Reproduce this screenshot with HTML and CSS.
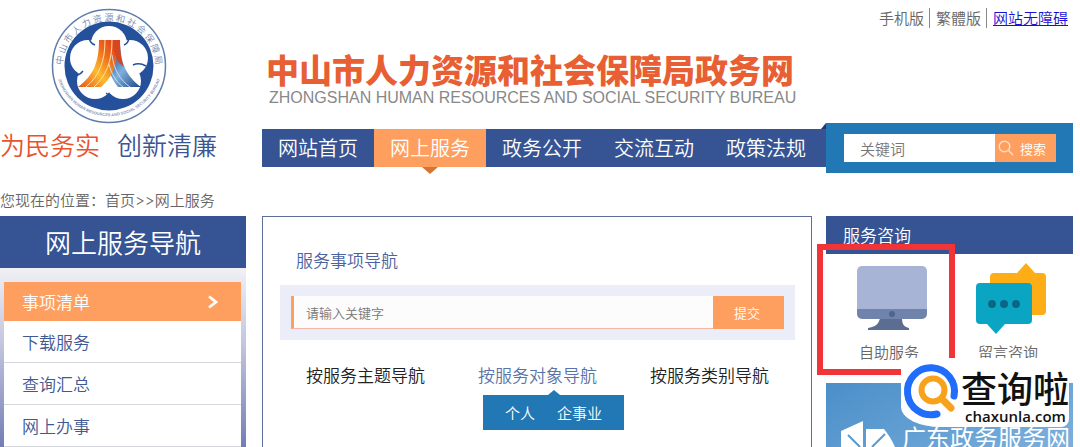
FILE: index.html
```html
<!DOCTYPE html>
<html lang="zh-CN">
<head>
    <meta charset="UTF-8">
    <meta name="viewport" content="width=device-width, initial-scale=1.0">
    <title>中山市人力资源和社会保障局政务网</title>
    <link rel="stylesheet" href="styles.css">
</head>
<body>

    <!-- Header -->
    <header class="header">
        <div class="brand">
            <svg class="emblem" viewBox="0 0 116 116" width="116" height="116" aria-hidden="true">
                <defs>
                    <path id="ringTop" d="M12 66 A46.500 46.500 0 1 1 104 66"/>
                    <path id="ringBottom" d="M5 62 A53.500 53.500 0 0 0 111 62"/>
                    <linearGradient id="fire" x1="1" y1="0" x2="0" y2="1">
                        <stop offset="0" stop-color="#dc3a1a"/>
                        <stop offset="0.3" stop-color="#ee6a1e"/>
                        <stop offset="0.6" stop-color="#fdbb2d"/>
                        <stop offset="1" stop-color="#e9501c"/>
                    </linearGradient>
                    <linearGradient id="water" x1="0" y1="0" x2="1" y2="1">
                        <stop offset="0" stop-color="#e8481f"/>
                        <stop offset="0.3" stop-color="#2a5a9c"/>
                        <stop offset="0.6" stop-color="#7fb0dc"/>
                        <stop offset="1" stop-color="#1c4684"/>
                    </linearGradient>
                </defs>
                <circle cx="58" cy="58" r="56.500" fill="#fff" stroke="#5f7cab" stroke-width="1.500"/>
                <circle cx="58" cy="58" r="44.500" fill="#25509b"/>
                <g fill="#fff">
                    <circle cx="58" cy="36" r="18"/>
                    <circle cx="79" cy="50" r="18"/>
                    <circle cx="72" cy="73" r="18"/>
                    <circle cx="44" cy="73" r="18"/>
                    <circle cx="37" cy="50" r="18"/>
                    <circle cx="58" cy="58" r="20"/>
                </g>
                <path d="M38 30c1 4 3 6 6 7M78 31c-1 3-2 5-5 6M95 58c-5-3-9-3-13-1M21 68c4 0 8-1 11-5M61 93c-1-4-3-6-6-8" stroke="#25509b" stroke-width="1.500" fill="none"/>
                <path d="M49 32h20C69 54 75 68 90 79H67C60 70 57 62 57 52z" fill="url(#water)"/>
                <path d="M48 32h19C67 54 63 68 50 79H27C42 68 48 55 48 32z" fill="url(#fire)"/>
                <path d="M62 32h7c0 12 1 20 4 27l-5-4c-4-7-6-13-6-23z" fill="#d9451f"/>
                <path d="M61 47C63 62 69 72 79 79M58 56C60 65 65 74 72 79" stroke="#c8def2" stroke-width="1" fill="none"/>
                <path d="M54 32C54 54 48 68 35 79M61 32C61 54 55 68 43 79" stroke="#ffe2a0" stroke-width="1" fill="none"/>
                <text class="ring-cn"><textPath href="#ringTop" startOffset="50%" text-anchor="middle">中 山 市 人 力 资 源 和 社 会 保 障 局</textPath></text>
                <text class="ring-en"><textPath href="#ringBottom" startOffset="50%" text-anchor="middle">ZHONGSHAN HUMAN RESOURCES AND SOCIAL SECURITY BUREAU</textPath></text>
            </svg>
            <p class="slogan"><span class="slogan-red">为民务实</span><span class="slogan-blue">创新清廉</span></p>
        </div>

        <div class="header-main">
            <div class="top-links">
                <a href="#">手机版</a>
                <a href="#">繁體版</a>
                <a href="#" class="barrier-free">网站无障碍</a>
            </div>
            <div class="site-title">
                <h1>中山市人力资源和社会保障局政务网</h1>
                <p>ZHONGSHAN HUMAN RESOURCES AND SOCIAL SECURITY BUREAU</p>
            </div>
            <div class="bar">
                <nav class="main-nav">
                    <a href="#">网站首页</a>
                    <a href="#" class="active">网上服务</a>
                    <a href="#">政务公开</a>
                    <a href="#">交流互动</a>
                    <a href="#">政策法规</a>
                </nav>
                <form class="site-search">
                    <input type="text" placeholder="关键词" aria-label="关键词">
                    <button type="button">
                        <svg viewBox="0 0 16 16" width="16" height="16" aria-hidden="true">
                            <circle cx="6.500" cy="6.500" r="5.300" fill="none" stroke="#ffdcc0" stroke-width="1.400"/>
                            <path d="M10.500 10.500l4.500 4.500" stroke="#ffdcc0" stroke-width="1.600"/>
                        </svg>
                        搜索
                    </button>
                </form>
            </div>
        </div>
    </header>

    <div class="breadcrumb">您现在的位置：<a href="#">首页</a><span>&gt;&gt;</span><a href="#">网上服务</a></div>

    <div class="page">
        <!-- Left menu -->
        <aside class="side">
            <h2>网上服务导航</h2>
            <div class="side-body">
                <ul>
                    <li class="active">
                        <a href="#">事项清单
                            <svg viewBox="0 0 12 14" width="12" height="14" aria-hidden="true">
                                <path d="M2 1.500l7 5.500-7 5.500" fill="none" stroke="#fff" stroke-width="2.800"/>
                            </svg>
                        </a>
                    </li>
                    <li><a href="#">下载服务</a></li>
                    <li><a href="#">查询汇总</a></li>
                    <li><a href="#">网上办事</a></li>
                </ul>
            </div>
        </aside>

        <div class="content">
            <!-- Service navigation -->
            <main class="panel">
                <h3>服务事项导航</h3>
                <form class="item-search">
                    <input type="text" placeholder="请输入关键字" aria-label="请输入关键字">
                    <button type="button">提交</button>
                </form>
                <div class="tabs">
                    <a href="#">按服务主题导航</a>
                    <div class="tab-open">
                        <a href="#">按服务对象导航</a>
                        <div class="sub-tabs">
                            <a href="#">个人</a>
                            <a href="#">企事业</a>
                        </div>
                    </div>
                    <a href="#">按服务类别导航</a>
                </div>
            </main>

            <!-- Right column -->
            <aside class="consult">
                <h3>服务咨询</h3>
                <div class="consult-list">
                    <a href="#">
                        <svg viewBox="0 0 72 74" width="72" height="74" aria-hidden="true">
                            <path d="M27 55h22c0 6 2 9 7 10v2H15v-2c7-1 11-4 12-10z" fill="#5b6e91"/>
                            <path d="M4 46h70v5a5 5 0 0 1-5 5H9a5 5 0 0 1-5-5z" fill="#7083ab"/>
                            <path d="M9 3h60a5 5 0 0 1 5 5v38H4V8a5 5 0 0 1 5-5z" fill="#a7b4d6"/>
                            <circle cx="39" cy="51" r="3" fill="#50658b"/>
                        </svg>
                        自助服务
                    </a>
                    <a href="#">
                        <svg viewBox="-3 0 72 74" width="72" height="74" aria-hidden="true">
                            <path d="M19 10h23l9-10 9 10h7a4 4 0 0 1 4 4v34a4 4 0 0 1-4 4H19a4 4 0 0 1-4-4V14a4 4 0 0 1 4-4z" fill="#fdae17"/>
                            <path d="M5 20h48a4 4 0 0 1 4 4v33a4 4 0 0 1-4 4H30L21 71 12 61H5a4 4 0 0 1-4-4V24a4 4 0 0 1 4-4z" fill="#0aa5c3"/>
                            <g fill="#0b6684">
                                <circle cx="17" cy="41" r="4"/>
                                <circle cx="29" cy="41" r="4"/>
                                <circle cx="41" cy="41" r="4"/>
                            </g>
                        </svg>
                        留言咨询
                    </a>
                </div>
                <a href="#" class="banner">
                    <svg viewBox="0 0 58 28" width="58" height="28" aria-hidden="true">
                        <path d="M1 12L23 2v26H1zM26 10h18c4 5 8 11 11 18H26z" fill="#fff"/>
                        <path d="M8 16l12 12M45 15L32 28" fill="none" stroke="#5a9ace" stroke-width="2"/>
                    </svg>
                    <span>广东政务服务网</span>
                </a>

                <div class="highlight"></div>

                <div class="watermark">
                    <svg viewBox="0 0 60 66" width="60" height="66" aria-hidden="true">
                        <path d="M36 56A23.500 23.500 0 1 1 53 38" fill="none" stroke="#1f6dfa" stroke-width="7" stroke-linecap="round"/>
                        <circle cx="32" cy="32" r="11.500" fill="none" stroke="#f8a11b" stroke-width="6"/>
                        <path d="M41 41l9 9" stroke="#f8a11b" stroke-width="7" stroke-linecap="round"/>
                    </svg>
                    <div class="watermark-text">
                        <strong>查询啦</strong>
                        <span>chaxunla.com</span>
                    </div>
                </div>
            </aside>
        </div>
    </div>

</body>
</html>
```
FILE: styles.css
```css
* {
    box-sizing: border-box;
}

body {
    margin: 0;
    height: 100vh;
    overflow: hidden;
    display: flex;
    flex-direction: column;
    background: #fff;
    color: #666;
    font-family: "Noto Sans CJK SC", sans-serif;
    font-size: 15px;
    font-weight: 350;
}

h1, h2, h3, p, ul {
    margin: 0;
    padding: 0;
    font-weight: 350;
}

ul {
    list-style: none;
}

a {
    color: inherit;
    text-decoration: none;
}

svg {
    display: block;
    flex-shrink: 0;
    overflow: visible;
}

input, button {
    border: none;
    border-radius: 0;
    margin: 0;
    padding: 0;
    font-family: inherit;
    font-weight: 350;
}

input {
    min-width: 0;
}

input::placeholder {
    color: #777;
    opacity: 1;
}

button {
    background: #ff9f5f;
    color: #fff;
    cursor: pointer;
}

/* Header */
.header {
    display: grid;
    grid-template-columns: minmax(0, 246fr) minmax(0, 811fr);
    column-gap: 16px;
    padding-right: 7px;
}

.brand {
    width: fit-content;
    padding-top: 8px;
}

.emblem {
    margin: 0 auto;
}

.ring-cn {
    font-size: 9px;
    fill: #7186b0;
}

.ring-en {
    font-family: "Liberation Sans", sans-serif;
    font-size: 4px;
    font-weight: 700;
    fill: #8798ba;
}

.slogan {
    display: flex;
    gap: 17px;
    font-size: 25px;
    line-height: 40px;
    white-space: nowrap;
}

.slogan-red {
    color: #e8532c;
}

.slogan-blue {
    color: #3b5591;
}

.header-main {
    display: flex;
    flex-direction: column;
}

.top-links {
    display: flex;
    justify-content: flex-end;
    padding: 8px 5px 0 0;
    line-height: 20px;
}

.top-links a + a {
    margin-left: 5px;
    padding-left: 6px;
    border-left: 1px solid #888;
}

.top-links .barrier-free {
    color: #1a10d8;
    text-decoration: underline;
}

.site-title {
    padding: 23px 0 14px 4px;
    white-space: nowrap;
}

.site-title h1 {
    color: #e75f33;
    font-size: 33px;
    font-weight: 900;
    line-height: 36px;
}

.site-title p {
    padding-left: 3px;
    color: #888;
    font-family: "Liberation Sans", sans-serif;
    font-size: 16px;
    font-weight: 400;
    line-height: 22px;
}

.bar {
    display: grid;
    grid-template-columns: minmax(0, 564fr) minmax(0, 247fr);
    align-items: center;
}

.main-nav {
    display: flex;
    height: 38px;
    padding-right: 4px;
    background: #365394;
    color: #fff;
    font-size: 20px;
    line-height: 38px;
    text-align: center;
    position: relative;
}

.main-nav::after {
    content: "";
    position: absolute;
    right: 0;
    top: -6px;
    border-left: 5px solid transparent;
    border-bottom: 6px solid #20386e;
}

.main-nav a {
    flex: 1;
    position: relative;
}

.main-nav .active {
    background: #ff9f5f;
}

.main-nav .active::after {
    content: "";
    position: absolute;
    left: 50%;
    top: 100%;
    margin-left: -8px;
    border: 8px solid transparent;
    border-top: 7px solid #d9742f;
    border-bottom: none;
}

.site-search {
    display: flex;
    height: 50px;
    padding: 11px 17px 11px 18px;
    background: #2178b5;
}

.site-search input {
    flex: 1;
    padding-left: 16px;
    background: #fff;
    font-size: 15px;
}

.site-search button {
    display: flex;
    align-items: center;
    gap: 6px;
    padding: 0 10px 0 3px;
    font-size: 13px;
}

.breadcrumb {
    padding: 16px 0 4px;
    line-height: 22px;
}

.breadcrumb span {
    font-family: Inter, sans-serif;
}

/* Page */
.page {
    flex: 1;
    display: grid;
    grid-template-columns: minmax(0, 246fr) minmax(0, 811fr);
    column-gap: 16px;
    padding-right: 7px;
}

.side {
    display: flex;
    flex-direction: column;
}

.side h2 {
    background: #365394;
    color: #fff;
    font-size: 26px;
    line-height: 52px;
    text-align: center;
}

.side-body {
    flex: 1;
    padding: 14px 5px 0 4px;
    background: linear-gradient(#f0f0f5, #c3c6de 40%, #6d78b3);
}

.side li {
    background: #fff;
    border-bottom: 1px solid #d5d8de;
    color: #3f5a92;
    font-size: 17px;
    line-height: 41px;
}

.side li.active {
    background: #ff9f5f;
    border-bottom: none;
    color: #fff;
    line-height: 39px;
}

.side li a {
    display: flex;
    align-items: center;
    justify-content: space-between;
    padding: 0 22px 0 18px;
}

.content {
    display: grid;
    grid-template-columns: minmax(0, 550fr) minmax(0, 247fr);
    column-gap: 14px;
}

.panel {
    padding: 27px 16px 0 17px;
    border: 1px solid #5d6f9b;
    border-bottom: none;
}

.panel h3 {
    padding-left: 16px;
    color: #4a63a0;
    font-size: 17px;
    line-height: 32px;
}

.item-search {
    display: flex;
    height: 55px;
    margin-top: 9px;
    padding: 11px;
    background: #ebedf8;
}

.item-search input {
    flex: 1;
    padding-left: 12px;
    border-left: 3px solid #ff9f5f;
    border-bottom: 1px solid #f6b7a8;
    background: #fcfcfd;
    font-size: 13px;
}

.item-search button {
    padding: 0 24px 0 21px;
    font-size: 13px;
}

.tabs {
    display: grid;
    grid-template-columns: repeat(3, 1fr);
    padding-top: 20px;
    color: #222;
    font-size: 17px;
    line-height: 30px;
    text-align: center;
}

.tab-open > a {
    color: #5a73a8;
}

.sub-tabs {
    display: flex;
    justify-content: center;
    gap: 22px;
    width: max-content;
    margin: 5px 0 0 32px;
    padding: 0 22px;
    background: #2178b5;
    color: #fff;
    font-size: 15px;
    line-height: 35px;
    white-space: nowrap;
    position: relative;
}

.sub-tabs::before {
    content: "";
    position: absolute;
    left: 50%;
    bottom: 100%;
    margin-left: -6px;
    border: 6px solid transparent;
    border-bottom: 5px solid #2178b5;
    border-top: none;
}

/* Right column */
.consult {
    display: flex;
    flex-direction: column;
    position: relative;
}

.consult h3 {
    padding-left: 17px;
    background: #365394;
    color: #fff;
    font-size: 17px;
    line-height: 38px;
}

.consult-list {
    display: flex;
    justify-content: space-between;
    padding: 9px 29px 0 27px;
}

.consult-list a {
    display: flex;
    flex-direction: column;
    align-items: center;
    gap: 3px;
    line-height: 24px;
}

.banner {
    flex: 1;
    display: flex;
    align-items: flex-start;
    gap: 4px;
    height: 64px;
    margin-top: 19px;
    padding: 36px 0 0 14px;
    overflow: hidden;
    background: linear-gradient(150deg, #4b8fc9, #7db1de);
    color: #fff;
    font-size: 24px;
    font-weight: 400;
    line-height: 36px;
    white-space: nowrap;
}

/* Red frame round the self-service entry */
.highlight {
    position: absolute;
    left: -9px;
    top: 28px;
    width: 138px;
    height: 131px;
    border: 6px solid #f03438;
}

.watermark {
    position: absolute;
    right: 4px;
    top: 142px;
    display: flex;
    height: 69px;
    background: #fff;
    border-radius: 0 0 8px 40px / 0 0 8px 20px;
    color: #111;
}

.watermark-text {
    display: flex;
    flex-direction: column;
    padding-top: 9px;
}

.watermark-text strong {
    font-size: 36px;
    font-weight: 500;
    line-height: 40px;
}

.watermark-text span {
    padding-left: 4px;
    font-family: "Open Sans", sans-serif;
    font-size: 15px;
    font-weight: 600;
    line-height: 18px;
}
```
